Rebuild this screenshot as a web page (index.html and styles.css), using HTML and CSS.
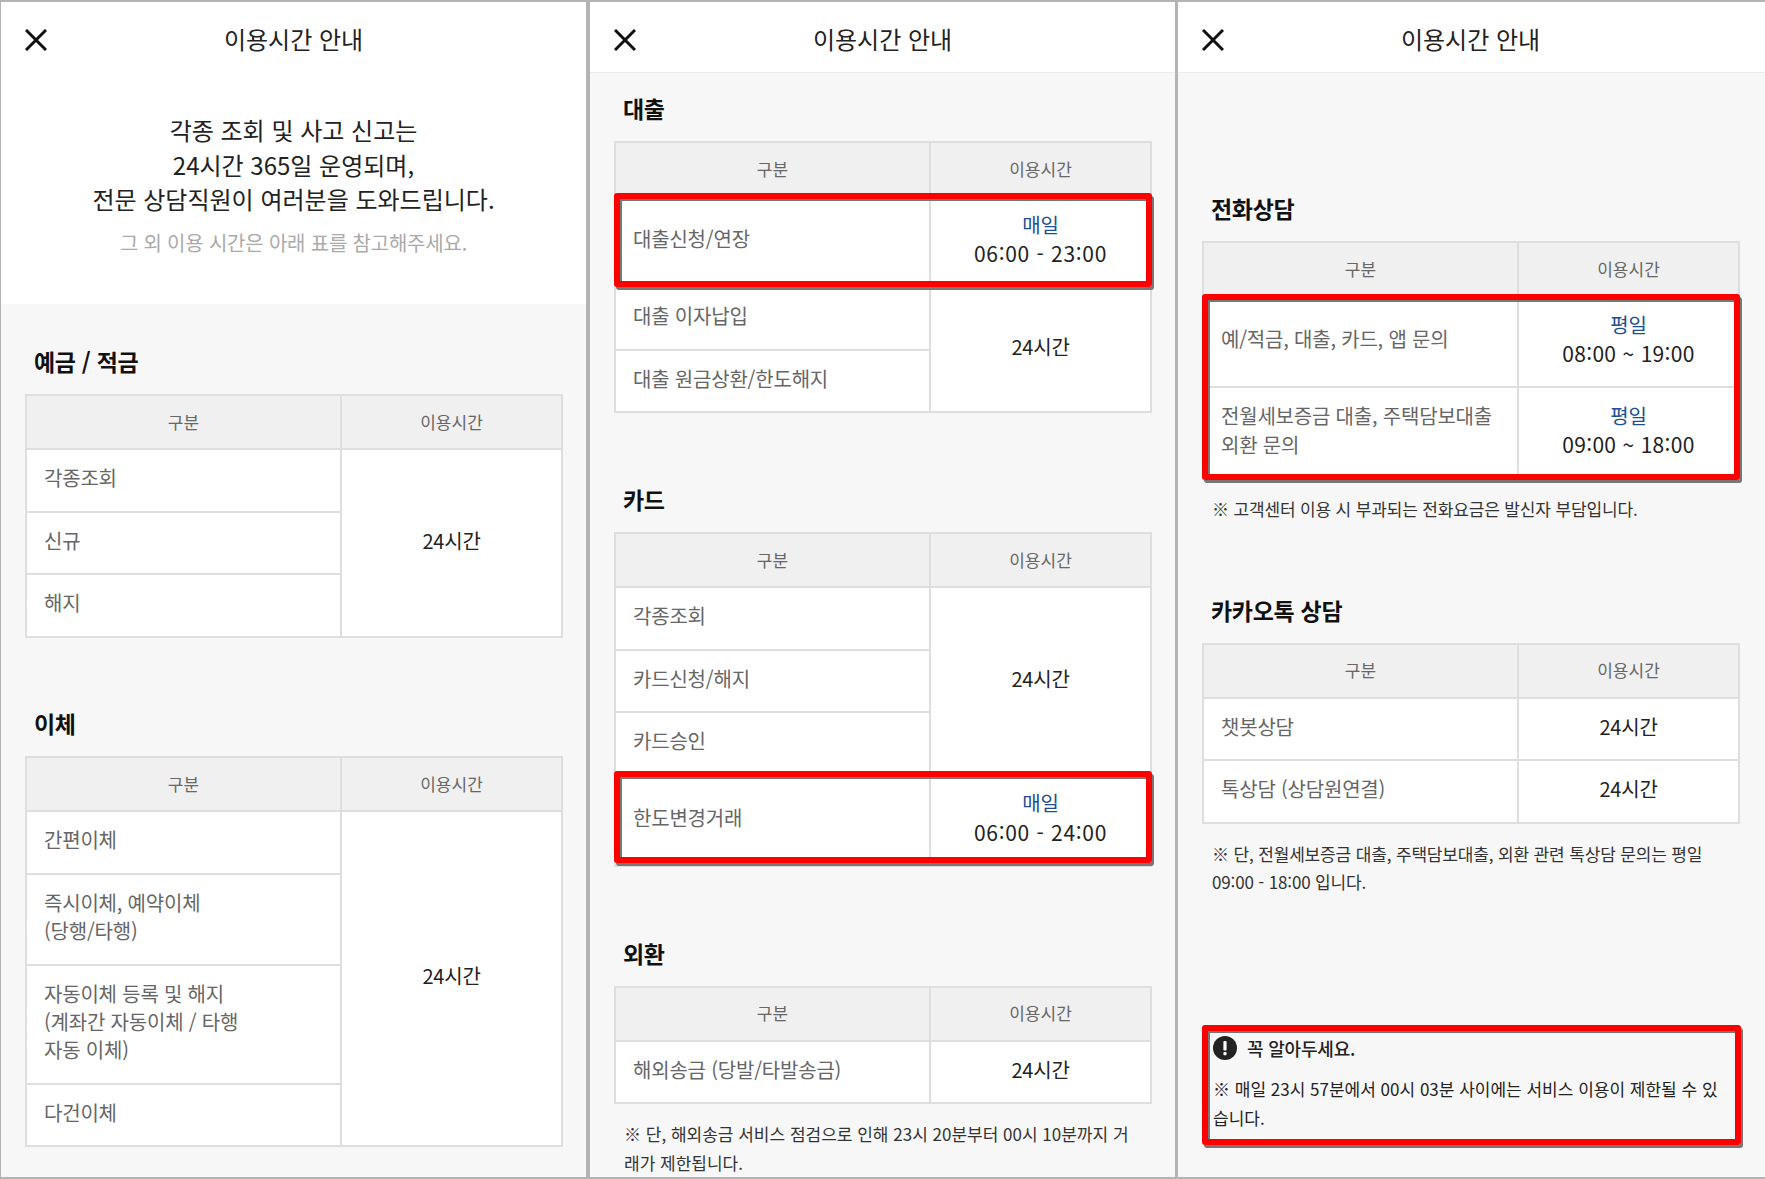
FILE: index.html
```html
<!DOCTYPE html>
<html lang="ko">
<head>
<meta charset="utf-8">
<title>이용시간 안내</title>
<link rel="stylesheet" href="styles.css">
</head>
<body>
<div class="frame">

<section class="panel">
  <header class="top top-plain">
    <svg class="close" viewBox="0 0 22 22"><path d="M1 1 21 21M21 1 1 21"/></svg>
    <h1 class="title">이용시간 안내</h1>
  </header>
  <div class="intro">
    <p class="lead">각종 조회 및 사고 신고는<br>24시간 365일 운영되며,<br>전문 상담직원이 여러분을 도와드립니다.</p>
    <p class="sub">그 외 이용 시간은 아래 표를 참고해주세요.</p>
  </div>
  <div class="body body-a">
    <div class="sec">
      <h2 class="head">예금 / 적금</h2>
      <table class="tbl">
        <colgroup><col class="c1"><col class="c2"></colgroup>
        <tr><th>구분</th><th>이용시간</th></tr>
        <tr class="r1"><td>각종조회</td><td class="val" rowspan="3">24시간</td></tr>
        <tr class="r1"><td>신규</td></tr>
        <tr class="r1"><td>해지</td></tr>
      </table>
    </div>
    <div class="sec">
      <h2 class="head">이체</h2>
      <table class="tbl">
        <colgroup><col class="c1"><col class="c2"></colgroup>
        <tr><th>구분</th><th>이용시간</th></tr>
        <tr class="r1"><td>간편이체</td><td class="val" rowspan="4">24시간</td></tr>
        <tr class="r2"><td>즉시이체, 예약이체<br>(당행/타행)</td></tr>
        <tr class="r3"><td>자동이체 등록 및 해지<br>(계좌간 자동이체 / 타행<br>자동 이체)</td></tr>
        <tr class="r1"><td>다건이체</td></tr>
      </table>
    </div>
  </div>
</section>

<section class="panel">
  <header class="top">
    <svg class="close" viewBox="0 0 22 22"><path d="M1 1 21 21M21 1 1 21"/></svg>
    <h1 class="title">이용시간 안내</h1>
  </header>
  <div class="body body-b">
    <div class="sec">
      <h2 class="head">대출</h2>
      <div class="wrap">
        <table class="tbl">
          <colgroup><col class="c1"><col class="c2"></colgroup>
          <tr><th>구분</th><th>이용시간</th></tr>
          <tr class="r2"><td>대출신청/연장</td><td class="val"><span class="day">매일</span><br><span class="time">06:00 - 23:00</span></td></tr>
          <tr class="r1"><td>대출 이자납입</td><td class="val" rowspan="2">24시간</td></tr>
          <tr class="r1"><td>대출 원금상환/한도해지</td></tr>
        </table>
        <div class="mark mark-loan"></div>
      </div>
    </div>
    <div class="sec">
      <h2 class="head">카드</h2>
      <div class="wrap">
        <table class="tbl">
          <colgroup><col class="c1"><col class="c2"></colgroup>
          <tr><th>구분</th><th>이용시간</th></tr>
          <tr class="r1"><td>각종조회</td><td class="val" rowspan="3">24시간</td></tr>
          <tr class="r1"><td>카드신청/해지</td></tr>
          <tr class="r1"><td>카드승인</td></tr>
          <tr class="r2"><td>한도변경거래</td><td class="val"><span class="day">매일</span><br><span class="time">06:00 - 24:00</span></td></tr>
        </table>
        <div class="mark mark-card"></div>
      </div>
    </div>
    <div class="sec">
      <h2 class="head">외환</h2>
      <table class="tbl">
        <colgroup><col class="c1"><col class="c2"></colgroup>
        <tr><th>구분</th><th>이용시간</th></tr>
        <tr class="r1"><td>해외송금 (당발/타발송금)</td><td class="val">24시간</td></tr>
      </table>
      <p class="note note-wide">※ 단, 해외송금 서비스 점검으로 인해 23시 20분부터 00시 10분까지 거래가 제한됩니다.</p>
    </div>
  </div>
</section>

<section class="panel">
  <header class="top">
    <svg class="close" viewBox="0 0 22 22"><path d="M1 1 21 21M21 1 1 21"/></svg>
    <h1 class="title title-last">이용시간 안내</h1>
  </header>
  <div class="body body-c">
    <div class="sec">
      <h2 class="head">전화상담</h2>
      <div class="wrap">
        <table class="tbl">
          <colgroup><col class="c1"><col class="c2"></colgroup>
          <tr><th>구분</th><th>이용시간</th></tr>
          <tr class="r2"><td>예/적금, 대출, 카드, 앱 문의</td><td class="val"><span class="day">평일</span><br><span class="time time-tilde">08:00 ~ 19:00</span></td></tr>
          <tr class="r2"><td>전월세보증금 대출, 주택담보대출<br>외환 문의</td><td class="val"><span class="day">평일</span><br><span class="time time-tilde">09:00 ~ 18:00</span></td></tr>
        </table>
        <div class="mark mark-call"></div>
      </div>
      <p class="note">※ 고객센터 이용 시 부과되는 전화요금은 발신자 부담입니다.</p>
    </div>
    <div class="sec">
      <h2 class="head">카카오톡 상담</h2>
      <table class="tbl">
        <colgroup><col class="c1"><col class="c2"></colgroup>
        <tr><th>구분</th><th>이용시간</th></tr>
        <tr class="r1"><td>챗봇상담</td><td class="val">24시간</td></tr>
        <tr class="r1"><td>톡상담 (상담원연결)</td><td class="val">24시간</td></tr>
      </table>
      <p class="note">※ 단, 전월세보증금 대출, 주택담보대출, 외환 관련 톡상담 문의는 평일<br>09:00 - 18:00 입니다.</p>
    </div>
    <div class="notice">
      <div class="notice-head">
        <svg class="alert" viewBox="0 0 24 24"><circle cx="12" cy="12" r="12"/><rect class="alert-mark" x="10.4" y="5" width="3.2" height="9.5" rx="1"/><rect class="alert-mark" x="10.4" y="16" width="3.2" height="3.2" rx="1"/></svg>
        <strong class="notice-title">꼭 알아두세요.</strong>
      </div>
      <p class="notice-text">※ 매일 23시 57분에서 00시 03분 사이에는 서비스 이용이 제한될 수 있습니다.</p>
    </div>
  </div>
</section>

</div>
</body>
</html>
```

FILE: styles.css
```css
* { box-sizing: border-box; margin: 0; padding: 0; }
html, body { width: 1765px; height: 1179px; overflow: hidden; }
body {
  background: #b4b4b4;
  font-family: "Noto Sans CJK KR", "Noto Sans", sans-serif;
  color: #222;
}
.frame {
  display: flex;
  gap: 4px;
  height: 1179px;
  padding: 2px 0 2px 1px;
}
.panel {
  width: 585px;
  flex: none;
  background: #f7f7f7;
  display: flex;
  flex-direction: column;
  overflow: hidden;
}
.panel:last-child { width: 587px; margin-left: -1px; }

.top {
  height: 71px;
  flex: none;
  background: #fff;
  border-bottom: 1px solid #ececec;
  display: flex;
  align-items: center;
  justify-content: center;
  position: relative;
}
.top-plain { border-bottom-color: #fff; }
.close {
  position: absolute;
  left: 24px;
  top: 27px;
  width: 22px;
  height: 22px;
  fill: none;
  stroke: #111;
  stroke-width: 3;
}
.title {
  font-size: 24px;
  font-weight: 400;
  line-height: 32px;
  margin-top: 3px;
  color: #222;
}
.title-last { margin-right: 2px; }

.intro {
  height: 231px;
  flex: none;
  background: #fff;
  padding-top: 40px;
  text-align: center;
}
.lead {
  font-size: 24px;
  line-height: 34.5px;
  color: #222;
}
.sub {
  font-size: 20px;
  line-height: 28px;
  margin-top: 12px;
  color: #aaa;
  letter-spacing: -0.2px;
}

.body { flex: 1; display: flex; flex-direction: column; padding-left: 24px; padding-right: 23px; }
.body-a { padding-top: 41px; }
.body-b { padding-top: 19px; }
.body-c { padding-top: 119px; }
.sec + .sec { margin-top: 70px; }
.body-a .sec + .sec { margin-top: 69.5px; }

.head {
  font-size: 23px;
  font-weight: 700;
  line-height: 32px;
  letter-spacing: -0.3px;
  color: #111;
  padding-left: 9px;
  margin-bottom: 17px;
}
.wrap { position: relative; }

.tbl {
  width: 536px;
  table-layout: fixed;
  border-collapse: collapse;
  background: #fff;
}
.c1 { width: 315px; }
.c2 { width: 221px; }
.tbl th, .tbl td { border: 2px solid #dedede; }
.tbl th {
  height: 54px;
  background: #f0f0f0;
  font-size: 17px;
  font-weight: 400;
  color: #666;
  padding-bottom: 2px;
}
.tbl td {
  font-size: 20px;
  line-height: 28.3px;
  color: #666;
  padding: 0 15px 4px 17px;
  letter-spacing: -0.2px;
}
.tbl .val { text-align: center; color: #222; padding-left: 15px; }
.r1 td { height: 62.5px; }
.r2 td { height: 91px; }
.r3 td { height: 119px; }
.day { color: #1c4f91; }
.time { font-size: 21px; letter-spacing: 0.7px; }
.time-tilde { letter-spacing: 0.3px; }

.note {
  font-size: 17px;
  line-height: 28.5px;
  letter-spacing: -0.15px;
  color: #333;
  padding: 0 10px;
  margin-top: 16px;
  word-break: break-all;
}
.note-wide { letter-spacing: 0; }

.mark, .notice {
  border: 6px solid #f00;
  border-radius: 3px;
  box-shadow: 2px 3px 0 #777, inset 2px 2px 0 #777;
}
.mark { position: absolute; left: 0; width: 538px; pointer-events: none; }
.mark-loan { top: 52px; height: 94px; }
.mark-card { top: 239px; height: 92px; }
.mark-call { top: 53px; height: 186px; }

.notice {
  margin: auto 0 32px 0;
  height: 120px;
  padding: 5px 5px 0 5px;
  flex: none;
  width: 539px;
}
.notice-head { display: flex; align-items: center; gap: 10px; height: 26px; margin-top: -1px; }
.alert { width: 24px; height: 24px; fill: #222; flex: none; }
.alert-mark { fill: #fff; }
.notice-title { font-size: 18px; font-weight: 500; letter-spacing: -0.2px; color: #222; }
.notice-text {
  font-size: 17px;
  line-height: 29px;
  color: #222;
  margin-top: 13px;
  word-break: break-all;
}
```
